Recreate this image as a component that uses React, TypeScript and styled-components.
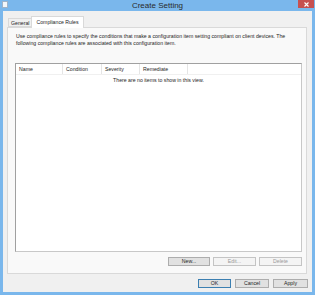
import styled, { createGlobalStyle } from 'styled-components'

const GlobalStyle = createGlobalStyle`
  html, body {
    margin: 0;
    padding: 0;
    background: #ffffff;
  }
  * {
    box-sizing: border-box;
  }
`

const columns = [
  { label: 'Name', width: 47 },
  { label: 'Condition', width: 39 },
  { label: 'Severity', width: 38 },
  { label: 'Remediate', width: 48 },
]

const App = () => {
  return (
    <>
      <GlobalStyle />
      <Window>
        <TitleBar>
          <AppIcon />
          <Title>Create Setting</Title>
          <CloseButton>
            <svg width="5" height="5" viewBox="0 0 5 5">
              <path d="M0.5 0.5 L4.5 4.5 M4.5 0.5 L0.5 4.5" stroke="#ffffff" strokeWidth="1.1" />
            </svg>
          </CloseButton>
        </TitleBar>

        <Client>
          <TabStrip>
            <Tab>General</Tab>
            <Tab $active>Compliance Rules</Tab>
          </TabStrip>

          <TabPanel>
            <Description>
              Use compliance rules to specify the conditions that make a configuration item setting compliant on client devices. The following compliance rules are associated with this configuration item.
            </Description>

            <ListBox>
              <HeaderRow>
                {columns.map((col) => (
                  <HeaderCell key={col.label} style={{ width: col.width }}>
                    {col.label}
                  </HeaderCell>
                ))}
              </HeaderRow>
              <EmptyText>There are no items to show in this view.</EmptyText>
            </ListBox>

            <ButtonRow>
              <Button $width={42}>New...</Button>
              <Button $width={43} disabled>Edit...</Button>
              <Button $width={43} disabled>Delete</Button>
            </ButtonRow>
          </TabPanel>

          <Footer>
            <Button $width={33} $default>OK</Button>
            <Button $width={34}>Cancel</Button>
            <Button $width={35}>Apply</Button>
          </Footer>
        </Client>
      </Window>
    </>
  )
}

export default App

const Window = styled('div')`
  width: 315px;
  height: 295px;
  display: flex;
  flex-direction: column;
  background-color: #7ab7ec;
  padding: 0 3px 3px 3px;
  font-family: 'Liberation Sans', Arial, sans-serif;
  font-size: 5px;
  color: #1e1e1e;
`

const TitleBar = styled('div')`
  height: 11px;
  display: flex;
  align-items: center;
  justify-content: center;
  position: relative;
`

const AppIcon = styled('div')`
  position: absolute;
  left: -1px;
  top: 1px;
  width: 6px;
  height: 7px;
  background: #f4f7fa;
  border: 1px solid #9fb3c8;
`

const Title = styled('span')`
  font-family: 'Liberation Sans', Arial, sans-serif;
  font-size: 8px;
  color: #2a2a2a;
  margin-top: -1px;
`

const CloseButton = styled('div')`
  position: absolute;
  right: -2px;
  top: 0;
  width: 16px;
  height: 8px;
  background-color: #c75050;
  display: flex;
  align-items: center;
  justify-content: center;
`

const Client = styled('div')`
  flex: 1;
  display: flex;
  flex-direction: column;
  background-color: #f0f0f0;
  padding: 5px 5px 0 4px;
`

const TabStrip = styled('div')`
  display: flex;
  align-items: flex-end;
  height: 11px;
  padding-left: 1px;
  position: relative;
  z-index: 1;
`

const Tab = styled('div')<{ $active?: boolean }>`
  height: ${(p) => (p.$active ? '12px' : '9px')};
  margin-bottom: ${(p) => (p.$active ? '-1px' : '0')};
  padding: ${(p) => (p.$active ? '2px 4px 0' : '1px 2px 0')};
  border: 1px solid #d9d9d9;
  border-bottom: ${(p) => (p.$active ? 'none' : '1px solid #d9d9d9')};
  margin-left: ${(p) => (p.$active ? '-1px' : '0')};
  background-color: ${(p) => (p.$active ? '#ffffff' : '#f0f0f0')};
  font-size: 5.2px;
  line-height: 6px;
  white-space: nowrap;
`

const TabPanel = styled('div')`
  height: 247px;
  display: flex;
  flex-direction: column;
  border: 1px solid #d9d9d9;
  background-color: #f9f9f9;
  padding: 5px 4px 0 7px;
`

const Description = styled('p')`
  margin: 0 0 0 1px;
  font-size: 5.2px;
  line-height: 7px;
  color: #1e1e1e;
  padding-right: 14px;
`

const ListBox = styled('div')`
  margin-top: 16px;
  height: 189px;
  border: 1px solid #a0a0a0;
  border-right-color: #c8c8c8;
  border-bottom-color: #c8c8c8;
  background-color: #ffffff;
`

const HeaderRow = styled('div')`
  display: flex;
  height: 11px;
  border-bottom: 1px solid #f0f0f0;
`

const HeaderCell = styled('div')`
  display: flex;
  align-items: center;
  padding-left: 3px;
  border-right: 1px solid #e5e5e5;
  font-size: 5.2px;
  color: #1e1e1e;
  white-space: nowrap;
`

const EmptyText = styled('div')`
  text-align: center;
  margin-top: 2px;
  font-size: 5.2px;
  color: #1e1e1e;
`

const ButtonRow = styled('div')`
  display: flex;
  justify-content: flex-end;
  gap: 3px;
  margin-top: 5px;
`

const Footer = styled('div')`
  display: flex;
  justify-content: flex-end;
  gap: 4px;
  padding-top: 5px;
  margin-right: -1px;
`

const Button = styled('button')<{ $width: number; $default?: boolean }>`
  width: ${(p) => p.$width}px;
  height: 9px;
  padding: 0;
  border: 1px solid ${(p) => (p.$default ? '#3c7fb1' : '#adadad')};
  background-color: #e1e1e1;
  font-family: 'Liberation Sans', Arial, sans-serif;
  font-size: 5.2px;
  line-height: 7px;
  color: #1e1e1e;

  &:disabled {
    border-color: #c4c4c4;
    background-color: #f4f4f4;
    color: #9a9a9a;
  }
`
